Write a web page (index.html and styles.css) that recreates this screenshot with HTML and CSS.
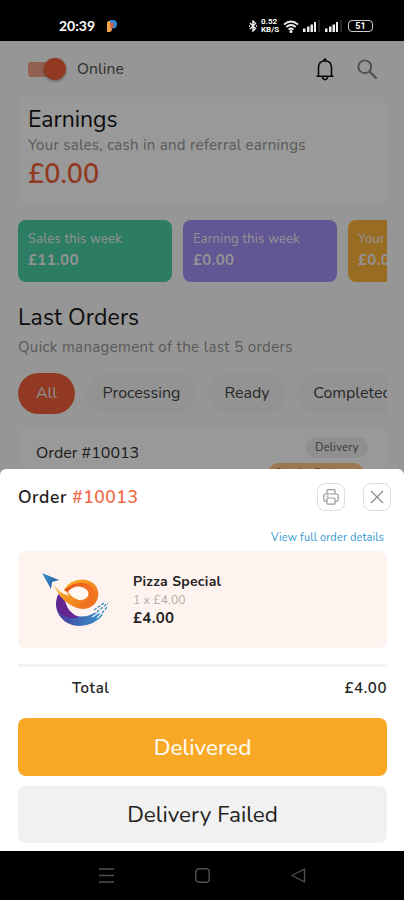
FILE: index.html
```
<!DOCTYPE html>
<html lang="en">
<head>
<meta charset="utf-8">
<title>Orders</title>
<link rel="stylesheet" href="styles.css">
</head>
<body>
<div class="phone">
  <header class="status">
    <span class="clock">20:39</span>
    <svg class="app-dot" width="10" height="12" viewBox="0 0 10 12"><path d="M0 3q0-2 2-2h3v8q0 3-3 3H0z" fill="#f3a54c"/><path d="M3 0h3q4 0 4 4.200T6 8.500H4z" fill="#3687cf"/><path d="M3 3h3.500v4L4 9z" fill="#d95c49"/></svg>
    <svg class="bt" width="8" height="12" viewBox="0 0 8 12" fill="none" stroke="#eee" stroke-width="1.400"><path d="M1 3l5.500 5.500L4 11V1l2.500 2.500L1 9M0 6h1M7 6h1"/></svg>
    <span class="speed"><span>0.52</span><span>KB/S</span></span>
    <svg class="wifi" width="16" height="13" viewBox="0 0 16 13" fill="none" stroke="#eee" stroke-width="1.700"><path d="M1 4.500q7-6 14 0M3.300 7q4.700-4 9.400 0M5.600 9.500q2.400-2 4.800 0"/><circle cx="8" cy="11.500" r=".7" fill="#eee"/></svg>
    <svg class="signal" width="17" height="12" viewBox="0 0 17 12"><path d="M0 8.500h2.500V12H0zM4 6.500h2.500V12H4zM7.500 4.500H10V12H7.500zM11 2h2v10h-2z" fill="#eee"/><path d="M15 0h2v12h-2z" fill="#252525"/></svg>
    <svg class="signal second" width="17" height="12" viewBox="0 0 17 12"><path d="M0 8.500h2.500V12H0zM4 6.500h2.500V12H4zM7.500 4.500H10V12H7.500zM11 2h2v10h-2z" fill="#eee"/><path d="M15 0h2v12h-2z" fill="#252525"/></svg>
    <span class="battery">51</span>
  </header>

  <main class="app">
    <div class="topbar">
      <span class="switch"><i></i></span>
      <span class="online">Online</span>
      <svg class="bell" width="18" height="23" viewBox="0 0 18 23" fill="none" stroke="#111" stroke-width="1.600"><path d="M.5 18.200h17M2.500 18V9.500q0-6.500 6.500-6.500t6.500 6.500V18"/><path d="M7.300 2.800L9 1l1.700 1.800M6.500 19q.3 2.600 2.500 2.600t2.500-2.600"/></svg>
      <svg class="search" width="21" height="21" viewBox="0 0 21 21" fill="none" stroke="#848484" stroke-width="1.900"><circle cx="7.800" cy="7.800" r="6.400"/><path d="M12.500 12.500l7 7" stroke-width="2.300"/></svg>
    </div>
    <section class="earnings">
      <h1>Earnings</h1>
      <p>Your sales, cash in and referral earnings</p>
      <strong>£0.00</strong>
    </section>
    <section class="stats">
      <div class="stat green"><span>Sales this week</span><b>£11.00</b></div>
      <div class="stat purple"><span>Earning this week</span><b>£0.00</b></div>
      <div class="stat amber"><span>Your cash in</span><b>£0.00</b></div>
    </section>
    <h2>Last Orders</h2>
    <p class="sub">Quick management of the last 5 orders</p>
    <nav class="chips">
      <span class="chip active">All</span>
      <span class="chip processing">Processing</span>
      <span class="chip ready">Ready</span>
      <span class="chip completed">Completed</span>
    </nav>
    <section class="order">
      <span class="order-name">Order #10013</span>
      <div class="tags"><span class="tag">Delivery</span><span class="tag out">Out for Delivery</span></div>
    </section>
    <div class="scrim"></div>
  </main>

  <section class="sheet">
    <div class="sheet-head">
      <h3>Order <em>#10013</em></h3>
      <span class="icon-btn"><svg width="16" height="16" viewBox="0 0 16 16" fill="none" stroke="#999" stroke-width="1.200"><path d="M4 5V1.600q0-.9.900-.9h6.200q.9 0 .9.900V5M4 12.200H2.500Q.8 12.200.8 10.500V7q0-2 2-2h10.400q2 0 2 2v3.500q0 1.700-1.700 1.700H12"/><rect x="4" y="9" width="8" height="6.200" rx="1"/><path d="M3.500 7.200h2"/></svg></span>
      <span class="icon-btn"><svg width="14" height="14" viewBox="0 0 14 14" fill="none" stroke="#888" stroke-width="1.200"><path d="M1 1l12 12M13 1L1 13"/></svg></span>
    </div>
    <a class="details">View full order details</a>
    <div class="item">
      <svg class="logo" width="68" height="56" viewBox="0 0 68 56">
        <defs>
          <linearGradient id="warm" x1="0" y1="0" x2="1" y2=".8"><stop offset="0" stop-color="#fbc02d"/><stop offset=".55" stop-color="#f59120"/><stop offset="1" stop-color="#ec6a1f"/></linearGradient>
          <linearGradient id="inner" x1="0" y1="0" x2="1" y2="0"><stop offset="0" stop-color="#e8501f"/><stop offset="1" stop-color="#f2761f"/></linearGradient>
          <linearGradient id="cool" x1="0" y1="0" x2="1" y2="0"><stop offset="0" stop-color="#52309a"/><stop offset=".4" stop-color="#3f62b0"/><stop offset="1" stop-color="#3a93cb"/></linearGradient>
          <linearGradient id="tip" x1="0" y1="0" x2="1" y2="1"><stop offset="0" stop-color="#3b9ad0"/><stop offset="1" stop-color="#214d98"/></linearGradient>
        </defs>
        <path d="M16.500 22C9 36 19 54 38 54Q53 53 61 43Q57 40 52 41Q42 47 31 43Q20 37 16.500 22z" fill="url(#cool)"/>
        <path d="M16.500 22Q11 39 23 44Q31 48 37 45Q26 41 23 29z" fill="#652490"/>
        <path d="M22 18Q27 7.500 41 7.500C62 9 61 36 41 37Q31 36 23 29Q17 23 11 12Q17 21 27 24Q25 20 22 18z" fill="url(#warm)"/>
        <path d="M22 18Q33 9 43 11Q54 15 53 24Q50 34 37 33.500Q47 30 47.500 22Q45 15 36 14.500Q29 15 26 20z" fill="url(#inner)"/>
        <path d="M26 20Q30 14.500 37 14.500Q46 16 46.500 21.500Q46 28.500 37 28Q30 26 26 20z" fill="#fff8f5"/>
        <path d="M0 1l17 7-7 2-1 7z" fill="url(#tip)"/>
        <path d="M50 45l8-5M55 46l6-6" stroke="#e9f3f8" stroke-width="1.200"/>
        <path d="M52 38l10-7M55 40l11-9M60 41l6-7" fill="none" stroke="#3f91c4" stroke-width="1.400" stroke-dasharray="3 1.500"/>
      </svg>
      <div class="item-text"><b>Pizza Special</b><span>1 x £4.00</span><strong>£4.00</strong></div>
    </div>
    <div class="total"><span>Total</span><span class="amount">£4.00</span></div>
    <button class="btn primary">Delivered</button>
    <button class="btn secondary">Delivery Failed</button>
  </section>

  <footer class="navbar">
    <svg width="15" height="15" viewBox="0 0 15 15" stroke="#505050" stroke-width="1.400"><path d="M0 1h15M0 7.500h15M0 14h15"/></svg>
    <svg width="15" height="15" viewBox="0 0 15 15" fill="none" stroke="#505050" stroke-width="1.400"><rect x=".8" y=".8" width="13.400" height="13.400" rx="3"/></svg>
    <svg width="15" height="15" viewBox="0 0 15 15" fill="none" stroke="#505050" stroke-width="1.400" stroke-linejoin="round"><path d="M13.500 1v13L1 7.500z"/></svg>
  </footer>
</div>
</body>
</html>
```
FILE: styles.css
```
* { box-sizing: border-box; margin: 0; padding: 0; }
body { font-family: Nunito, Lato, "Noto Sans", sans-serif; background: #000; }
.phone { width: 404px; height: 900px; position: relative; overflow: hidden; display: flex; flex-direction: column; background: #000; }

.status { height: 41px; flex: none; display: flex; align-items: center; padding: 12px 31px 0 59px; color: #fff; }
.clock { font: 700 14px/16px Lato, sans-serif; width: 37px; letter-spacing: 0; padding-bottom: 2px; white-space: nowrap; }
.app-dot { margin-left: 11px; margin-bottom: 2px; }
.bt { margin-left: auto; }
.speed { width: 19px; margin-left: 4px; display: flex; flex-direction: column; font: 700 8px/8px Roboto, sans-serif; }
.speed span { height: 8px; }
.wifi { margin-left: 3px; }
.signal { margin-left: 4px; }
.signal.second { margin-left: 5px; }
.battery { margin-left: 6px; width: 25px; height: 12px; border: 1.5px solid #ccc; border-radius: 4px; font: 700 9px/10px Roboto, sans-serif; text-align: center; }
.bt, .speed, .wifi, .signal, .battery { margin-bottom: 1px; }

.app { position: relative; height: 810px; flex: none; padding: 0 17px 0 18px; background: #fafafa; }
.scrim { position: absolute; inset: 0; background: rgba(0, 0, 0, .4); }
.topbar { height: 56px; display: flex; align-items: center; padding: 0 9px 0 10px; }
.switch { width: 38px; height: 22px; display: flex; align-items: center; justify-content: flex-end; background: linear-gradient(#f4a087, #f4a087) 0 50% / 28px 15px no-repeat; border-radius: 8px; }
.switch i { width: 22px; height: 22px; border-radius: 50%; background: #f26039; box-shadow: 0 1px 3px rgba(0, 0, 0, .4); }
.online { margin-left: 11px; padding-bottom: 2px; font-size: 15.500px; letter-spacing: .15px; color: #4b4b4b; }
.bell { margin-left: auto; }
.search { margin-left: 23px; }

.earnings { height: 107px; padding: 9px 10px 0; margin-right: 1px; background: #fff; border-radius: 6px; display: flex; flex-direction: column; }
h1 { font-size: 23px; line-height: 27px; font-weight: 400; color: #151515; }
.earnings p { font-size: 15px; line-height: 24px; letter-spacing: .29px; color: #969696; white-space: nowrap; }
.earnings strong { font-size: 27px; line-height: 36px; font-weight: 600; color: #f26039; }

.stats { margin-top: 16px; display: flex; gap: 11px; overflow: hidden; }
.stat { flex: none; width: 154px; height: 62px; border-radius: 8px; padding: 9px 10px; color: #f4f4f4; display: flex; flex-direction: column; white-space: nowrap; }
.stat span { font-size: 13px; line-height: 20px; letter-spacing: .2px; }
.stat b { font-size: 15px; line-height: 23px; letter-spacing: .35px; }
.green { background: #4ad0a7; }
.purple { background: #a38ff8; }
.amber { background: #ffb43d; }

h2 { margin-top: 20px; font-size: 23px; line-height: 32px; font-weight: 400; letter-spacing: .1px; color: #151515; }
.sub { font-size: 15px; line-height: 22px; margin-top: 2px; letter-spacing: .36px; color: #969696; white-space: nowrap; }
.chips { margin-top: 15px; display: flex; gap: 11px; overflow: hidden; }
.chip { flex: none; height: 41px; border-radius: 21px; background: #f6f6f6; font-size: 16px; line-height: 40px; text-align: center; color: #444; }
.active { width: 57px; background: #f26039; color: #eee; }
.processing { width: 111px; }
.ready { width: 78px; }
.completed { width: 111px; }
.order { margin-top: 13px; height: 80px; background: #fff; border-radius: 6px; padding: 10px 19px 0 18px; display: flex; justify-content: space-between; }
.order-name { font-size: 16px; line-height: 32px; color: #333; }
.tags { display: flex; flex-direction: column; align-items: flex-end; gap: 5px; }
.tag { height: 21px; width: 62px; border-radius: 11px; background: #eee; font-size: 11px; line-height: 21px; letter-spacing: .3px; text-align: center; color: #555; }
.out { width: 96px; margin-right: 4px; background: #ffc98b; color: #a66a2d; }

.sheet { position: absolute; left: 0; right: 0; top: 469px; height: 382px; background: #fff; border-radius: 6px 6px 0 0; padding: 0 17px 0 18px; display: flex; flex-direction: column; }
.sheet-head { height: 56px; display: flex; align-items: center; margin-right: -4px; }
h3 { font-size: 17.500px; font-weight: 600; letter-spacing: .55px; color: #222; margin-right: auto; }
h3 em { font-style: normal; color: #f26b49; }
.icon-btn { width: 28px; height: 28px; border: 1px solid #ddd; border-radius: 8px; display: grid; place-items: center; margin-left: 18px; }
.details { align-self: flex-end; font-size: 11px; line-height: 16px; letter-spacing: .15px; margin: 5px 3px 5px 0; color: #3199d0; white-space: nowrap; }
.item { height: 97px; flex: none; background: #fff3ef; border-radius: 7px; display: flex; padding: 21px 24px 0; }
.item-text { margin-left: 23px; display: flex; flex-direction: column; color: #222; white-space: nowrap; }
.item-text b { font-size: 14px; line-height: 19px; letter-spacing: .3px; }
.item-text span { font-size: 12px; line-height: 18px; letter-spacing: .15px; color: #b4aaa8; }
.item-text strong { font-size: 15px; line-height: 18px; letter-spacing: .35px; }
.total { margin-top: 16px; border-top: 3px solid #f3f3f3; height: 54px; display: flex; justify-content: space-between; padding-left: 54px; font-size: 15px; line-height: 42px; font-weight: 600; letter-spacing: .6px; color: #222; }
.btn { border: 0; flex: none; border-radius: 8px; font-family: inherit; font-size: 22.500px; }
.primary { height: 58px; background: #f9a825; color: #fffaf0; font-weight: 500; }
.secondary { margin-top: 10px; height: 57px; background: #f1f1f1; color: #222; }

.navbar { height: 49px; flex: none; display: flex; align-items: center; justify-content: center; gap: 81px; }
```
